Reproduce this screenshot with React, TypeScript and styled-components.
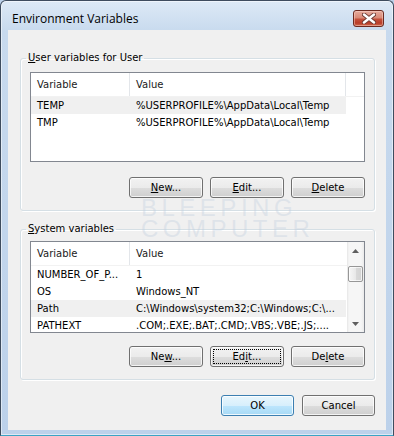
import React from 'react';
import styled, { createGlobalStyle, css } from 'styled-components';

const GlobalStyle = createGlobalStyle`
  html, body {
    margin: 0;
    padding: 0;
    background: #bcd1ea;
  }
  * {
    box-sizing: border-box;
  }
`;

const UI_FONT = `"DejaVu Sans", Tahoma, sans-serif`;

const Window = styled.div`
  width: 394px;
  height: 436px;
  display: flex;
  flex-direction: column;
  padding: 0 7px 5px 7px;
  border: 1px solid #3e4c5e;
  border-bottom-color: #3aa3c4;
  border-radius: 6px 6px 0 0;
  background: linear-gradient(180deg, #dde9f6 0px, #c8daee 30px, #bcd1ea 100%);
  box-shadow: inset 0 0 0 1px rgba(255, 255, 255, 0.5);
  font-family: ${UI_FONT};
  font-size: 10px;
  color: #000;
`;

const TitleBar = styled.div`
  height: 29px;
  flex: none;
  display: flex;
  align-items: flex-start;
  justify-content: space-between;
`;

const Title = styled.div`
  margin: 10px 0 0 4px;
  font-family: "Open Sans", "Noto Sans", sans-serif;
  font-size: 12px;
  line-height: 16px;
  color: #000;
`;

const CloseButton = styled.div`
  width: 31px;
  height: 17px;
  margin: 9px 2px 0 0;
  border: 1px solid #6b2a20;
  border-radius: 3px;
  background: linear-gradient(180deg, #e6ab9d 0%, #d98a77 45%, #c4503b 55%, #b83d29 80%, #cf6a4e 100%);
  box-shadow: inset 0 0 0 1px rgba(255, 220, 210, 0.45);
  display: flex;
  align-items: center;
  justify-content: center;
`;

const Client = styled.div`
  flex: 1;
  position: relative;
  padding: 21px 11px 0 12px;
  background: #f0f0f0;
  display: flex;
  flex-direction: column;
`;

const GroupBox = styled.fieldset<{ $top: number; $gap?: number }>`
  margin: ${(p) => p.$gap ?? 0}px 0 0 0;
  padding: ${(p) => p.$top}px 9px 12px 9px;
  min-width: 0;
  border: 1px solid #d5dfe5;
  border-radius: 3px;
  box-shadow: inset 1px 1px 0 #fff, 1px 1px 0 #fff;
`;

const GroupLabel = styled.legend`
  margin-left: -4px;
  padding: 0 2px;
  font-size: 10px;
  line-height: 14px;
`;

const Key = styled.span`
  text-decoration: underline;
  text-underline-offset: 1px;
`;

const ListBox = styled.div<{ $height: number }>`
  height: ${(p) => p.$height}px;
  display: flex;
  border: 1px solid #828790;
  background: #fff;
`;

const ListBody = styled.div`
  flex: 1;
  min-width: 0;
  overflow: hidden;
`;

const HeaderRow = styled.div`
  height: 24px;
  display: grid;
  grid-template-columns: 99px 216px 1fr;
  border-bottom: 1px solid #f2f2f2;
`;

const HeaderCell = styled.div`
  padding-left: 6px;
  line-height: 23px;
  border-right: 1px solid #e3e6ea;
  color: #1a1a1a;

  &:last-child {
    border-right: none;
  }
`;

const Row = styled.div<{ $selected?: boolean }>`
  height: 17px;
  width: 315px;
  display: grid;
  grid-template-columns: 99px 216px;
  background: ${(p) => (p.$selected ? '#f0f0f0' : 'transparent')};
`;

const Cell = styled.div`
  padding-left: 6px;
  line-height: 17px;
  white-space: nowrap;
  overflow: hidden;
`;

const ScrollBar = styled.div`
  width: 17px;
  flex: none;
  display: flex;
  flex-direction: column;
  background: linear-gradient(90deg, #e6e6e6 0px, #f6f6f6 2px, #f6f6f6 14px, #ebebeb 100%);
`;

const ScrollArrow = styled.div`
  height: 17px;
  display: flex;
  align-items: center;
  justify-content: center;
`;

const ScrollTrack = styled.div`
  flex: 1;
  padding: 7px 1px 0 1px;
`;

const Thumb = styled.div`
  height: 16px;
  border: 1px solid #979797;
  border-radius: 2px;
  background: linear-gradient(90deg, #f6f6f6 0%, #e8e8e8 50%, #d9d9d9 51%, #d2d2d2 100%);
  box-shadow: inset 0 0 0 1px rgba(255, 255, 255, 0.7);
`;

const ButtonRow = styled.div<{ $gap: number; $top: number }>`
  display: flex;
  justify-content: flex-end;
  gap: ${(p) => p.$gap}px;
  margin-top: ${(p) => p.$top}px;
`;

const Button = styled.div<{ $width: number; $default?: boolean; $focused?: boolean }>`
  position: relative;
  width: ${(p) => p.$width}px;
  height: 21px;
  display: flex;
  align-items: center;
  justify-content: center;
  font-size: 10px;
  border: 1px solid #707070;
  border-radius: 3px;
  background: linear-gradient(180deg, #f2f2f2 0%, #ebebeb 50%, #dddddd 51%, #cfcfcf 100%);
  box-shadow: inset 0 0 0 1px rgba(255, 255, 255, 0.75);

  ${(p) =>
    p.$default &&
    css`
      border-color: #3c7fb1;
      background: linear-gradient(180deg, #e8f6fd 0%, #d7effc 50%, #bde6fd 51%, #a7d9f5 100%);
      box-shadow: inset 0 0 0 1px rgba(255, 255, 255, 0.8);
    `}

  ${(p) =>
    p.$focused &&
    css`
      &::after {
        content: '';
        position: absolute;
        inset: 2px;
        border: 1px dotted #000;
        border-radius: 1px;
      }
    `}
`;

const Watermark = styled.div`
  position: absolute;
  left: 133px;
  top: 167px;
  font-family: "Liberation Sans", Arial, sans-serif;
  font-size: 24px;
  line-height: 21px;
  letter-spacing: 4.5px;
  color: rgba(192, 206, 222, 0.38);
  pointer-events: none;
`;

const WatermarkLine = styled.div`
  height: 21px;
`;

const UpArrow = () => (
  <svg width="7" height="4" viewBox="0 0 7 4">
    <polygon points="3.5,0 7,4 0,4" fill="#5f5f5f" />
  </svg>
);

const DownArrow = () => (
  <svg width="7" height="4" viewBox="0 0 7 4">
    <polygon points="0,0 7,0 3.5,4" fill="#5f5f5f" />
  </svg>
);

type EnvVar = { name: string; value: string };

const userVars: EnvVar[] = [
  { name: 'TEMP', value: '%USERPROFILE%\\AppData\\Local\\Temp' },
  { name: 'TMP', value: '%USERPROFILE%\\AppData\\Local\\Temp' },
];

const systemVars: EnvVar[] = [
  { name: 'NUMBER_OF_P...', value: '1' },
  { name: 'OS', value: 'Windows_NT' },
  { name: 'Path', value: 'C:\\Windows\\system32;C:\\Windows;C:\\...' },
  { name: 'PATHEXT', value: '.COM;.EXE;.BAT;.CMD;.VBS;.VBE;.JS;....' },
];

const App: React.FC = () => {
  return (
    <>
      <GlobalStyle />
      <Window>
        <TitleBar>
          <Title>Environment Variables</Title>
          <CloseButton>
            <svg width="14" height="11" viewBox="0 0 14 11">
              <path d="M2 1.5 L12 9.5 M12 1.5 L2 9.5" stroke="#6d3a33" strokeWidth="4.2" strokeLinecap="round" />
              <path d="M2 1.5 L12 9.5 M12 1.5 L2 9.5" stroke="#ffffff" strokeWidth="2.4" strokeLinecap="round" />
            </svg>
          </CloseButton>
        </TitleBar>

        <Client>
          <GroupBox $top={7}>
            <GroupLabel>
              <Key>U</Key>ser variables for User
            </GroupLabel>
            <ListBox $height={90}>
              <ListBody>
                <HeaderRow>
                  <HeaderCell>Variable</HeaderCell>
                  <HeaderCell>Value</HeaderCell>
                  <HeaderCell />
                </HeaderRow>
                {userVars.map((v, i) => (
                  <Row key={v.name} $selected={i === 0}>
                    <Cell>{v.name}</Cell>
                    <Cell>{v.value}</Cell>
                  </Row>
                ))}
              </ListBody>
            </ListBox>
            <ButtonRow $gap={7} $top={15}>
              <Button $width={74}>
                <span><Key>N</Key>ew...</span>
              </Button>
              <Button $width={74}>
                <span><Key>E</Key>dit...</span>
              </Button>
              <Button $width={74}>
                <span><Key>D</Key>elete</span>
              </Button>
            </ButtonRow>
          </GroupBox>

          <GroupBox $top={5} $gap={11}>
            <GroupLabel>
              <Key>S</Key>ystem variables
            </GroupLabel>
            <ListBox $height={92}>
              <ListBody>
                <HeaderRow>
                  <HeaderCell>Variable</HeaderCell>
                  <HeaderCell>Value</HeaderCell>
                </HeaderRow>
                {systemVars.map((v) => (
                  <Row key={v.name} $selected={v.name === 'Path'}>
                    <Cell>{v.name}</Cell>
                    <Cell>{v.value}</Cell>
                  </Row>
                ))}
              </ListBody>
              <ScrollBar>
                <ScrollArrow>
                  <UpArrow />
                </ScrollArrow>
                <ScrollTrack>
                  <Thumb />
                </ScrollTrack>
                <ScrollArrow>
                  <DownArrow />
                </ScrollArrow>
              </ScrollBar>
            </ListBox>
            <ButtonRow $gap={7} $top={13}>
              <Button $width={74}>
                <span>Ne<Key>w</Key>...</span>
              </Button>
              <Button $width={74} $focused>
                <span>Ed<Key>i</Key>t...</span>
              </Button>
              <Button $width={74}>
                <span>De<Key>l</Key>ete</span>
              </Button>
            </ButtonRow>
          </GroupBox>

          <ButtonRow $gap={8} $top={15}>
            <Button $width={73} $default>
              OK
            </Button>
            <Button $width={73}>Cancel</Button>
          </ButtonRow>

          <Watermark>
            <WatermarkLine>BLEEPING</WatermarkLine>
            <WatermarkLine>COMPUTER</WatermarkLine>
          </Watermark>
        </Client>
      </Window>
    </>
  );
};

export default App;
